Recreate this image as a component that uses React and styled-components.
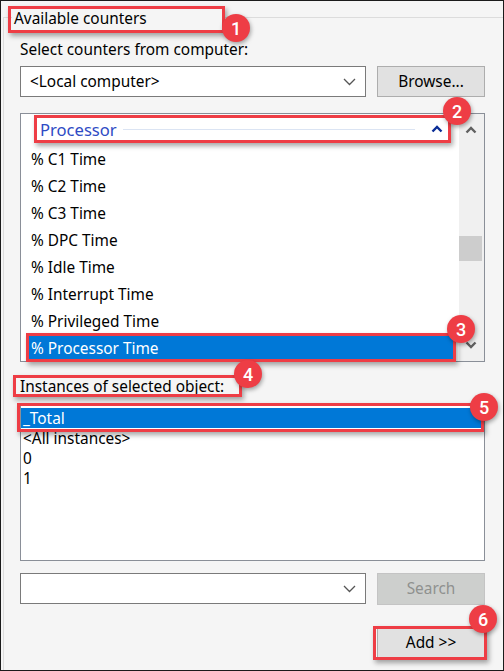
import React from 'react';
import styled, { createGlobalStyle } from 'styled-components';

const GlobalStyle = createGlobalStyle`
  body {
    margin: 0;
    background: #f5f5f5;
  }
`;

const RED = '#ee3d45';

const Frame = styled.div`
  width: 504px;
  height: 671px;
  box-sizing: border-box;
  border: 1px solid #1b1b1b;
  background: #f5f5f5;
  padding: 16px 0 0 2px;
  font-family: "Noto Sans", "Open Sans", sans-serif;
  font-size: 15.4px;
  color: #000;
`;

// group box with light frame on top/left
const Group = styled.div`
  height: 100%;
  box-sizing: border-box;
  border-top: 1px solid #dcdcdc;
  border-left: 1px solid #dcdcdc;
  display: flex;
  flex-direction: column;
  padding: 0 18px 0 16px;
`;

const Callout = styled.div`
  position: relative;
  align-self: ${(p) => p.$align || 'stretch'};
  margin: ${(p) => p.$margin || '0'};
`;

const Mark = styled.span`
  position: absolute;
  left: ${(p) => p.$x}px;
  top: ${(p) => p.$y}px;
  width: ${(p) => p.$w}px;
  height: ${(p) => p.$h}px;
  box-sizing: border-box;
  border: 3px solid ${RED};
  box-shadow: 2px 3px 5px rgba(0, 0, 0, 0.35);
  pointer-events: none;
  z-index: 2;
`;

const Badge = styled.span`
  position: absolute;
  left: ${(p) => p.$cx}px;
  top: ${(p) => p.$cy}px;
  transform: translate(-50%, -50%);
  width: 28px;
  height: 28px;
  border-radius: 50%;
  background: ${RED};
  color: #fff;
  font-family: Roboto, "Liberation Sans", sans-serif;
  font-size: 18px;
  font-weight: 500;
  display: flex;
  align-items: center;
  justify-content: center;
  box-shadow: 1px 2px 4px rgba(0, 0, 0, 0.35);
  z-index: 3;
`;

const Legend = styled.div`
  width: 210px;
  height: 20px;
  line-height: 22px;
  padding: 0 2px;
  box-sizing: border-box;
  background: #f5f5f5;
`;

const FieldLabel = styled.div`
  line-height: 20px;
  margin-top: ${(p) => p.$gap || 0}px;
  white-space: nowrap;
`;

const Row = styled.div`
  display: flex;
  gap: 11px;
  margin-top: ${(p) => p.$gap || 0}px;
  justify-content: ${(p) => p.$justify || 'flex-start'};
`;

const Combo = styled.div`
  flex: 1;
  height: 31px;
  box-sizing: border-box;
  border: 1px solid #7a7a7a;
  background: #fff;
  display: flex;
  align-items: center;
  padding: 0 9px 0 9px;
  justify-content: space-between;
`;

const Button = styled.div`
  width: 108px;
  height: ${(p) => p.$h || 31}px;
  box-sizing: border-box;
  border: 1px solid ${(p) => (p.$disabled ? '#c4c4c4' : '#adadad')};
  background: ${(p) => (p.$disabled ? '#cdcfcd' : '#e1e1e1')};
  color: ${(p) => (p.$disabled ? '#8f918f' : '#000')};
  display: flex;
  align-items: center;
  justify-content: center;
  padding-bottom: 1px;
`;

const ListBox = styled.div`
  margin-top: 16px;
  height: 249px;
  box-sizing: border-box;
  border: 1px solid #8a8f98;
  background: #fff;
  display: flex;
`;

const Items = styled.div`
  flex: 1;
  display: flex;
  flex-direction: column;
`;

const GroupHeader = styled.div`
  height: 30px;
  display: flex;
  align-items: center;
  padding: 0 16px 0 19px;
  color: #2e4bc4;
  font-size: 16.6px;
`;

const HeaderLine = styled.div`
  flex: 1;
  height: 1px;
  background: #dbe4f3;
  margin: 0 16px 0 6px;
`;

const ItemList = styled.div`
  margin: 1px 3px 0 5px;
`;

const Item = styled.div`
  height: 27px;
  box-sizing: border-box;
  padding: 2px 0 0 5px;
  line-height: 25px;
  white-space: nowrap;
  background: ${(p) => (p.$selected ? '#0078d7' : 'transparent')};
  color: ${(p) => (p.$selected ? '#fff' : '#000')};
`;

const Scrollbar = styled.div`
  width: 25px;
  background: #f0f0f0;
  display: flex;
  flex-direction: column;
`;

const ScrollArrow = styled.div`
  height: 32px;
  display: flex;
  align-items: center;
  justify-content: center;
  padding-right: 2px;
`;

const Track = styled.div`
  flex: 1;
`;

const Thumb = styled.div`
  height: 25px;
  margin: 90px 2px 0 0;
  background: #cdcdcd;
`;

const InstList = styled.div`
  margin-top: 7px;
  height: 157px;
  box-sizing: border-box;
  border: 1px solid #8a8f98;
  background: #fff;
  padding: 3px 3px 0 0;
`;

const InstItem = styled.div`
  height: 20px;
  line-height: 21px;
  padding-left: 2px;
  white-space: nowrap;
  background: ${(p) => (p.$selected ? '#0078d7' : 'transparent')};
  color: ${(p) => (p.$selected ? '#fff' : '#000')};
`;

const ChevronDown = () => (
  <svg width="13" height="8" viewBox="0 0 13 8">
    <polyline points="1,1 6.5,6.5 12,1" fill="none" stroke="#555" strokeWidth="1.3" />
  </svg>
);

const Caret = ({ up = true, color }) => (
  <svg width="12" height="8" viewBox="0 0 12 8">
    <polyline
      points={up ? '1.5,6.5 6,2 10.5,6.5' : '1.5,1.5 6,6 10.5,1.5'}
      fill="none"
      stroke={color}
      strokeWidth="2.4"
    />
  </svg>
);

const counters = [
  '% C1 Time',
  '% C2 Time',
  '% C3 Time',
  '% DPC Time',
  '% Idle Time',
  '% Interrupt Time',
  '% Privileged Time',
  '% Processor Time',
];

const instances = ['_Total', '<All instances>', '0', '1'];

export default function App() {
  return (
    <>
      <GlobalStyle />
      <Frame>
        <Group>
          <Callout $align="flex-start" $margin="-10px 0 0 -8px">
            <Legend>Available counters</Legend>
            <Mark $x={-4} $y={-2} $w={217} $h={27} />
            <Badge $cx={224} $cy={20}>1</Badge>
          </Callout>

          <FieldLabel $gap={12}>Select counters from computer:</FieldLabel>
          <Row $gap={6}>
            <Combo>
              <span>&lt;Local computer&gt;</span>
              <ChevronDown />
            </Combo>
            <Button>Browse...</Button>
          </Row>

          <ListBox>
            <Items>
              <Callout>
                <GroupHeader>
                  <span>Processor</span>
                  <HeaderLine />
                  <Caret color="#0a2d96" />
                </GroupHeader>
                <Mark $x={13} $y={1} $w={417} $h={28} />
                <Badge $cx={436} $cy={-3}>2</Badge>
              </Callout>
              <ItemList>
                {counters.map((c) =>
                  c === '% Processor Time' ? (
                    <Callout key={c}>
                      <Item $selected>{c}</Item>
                      <Mark $x={0} $y={-1} $w={430} $h={29} />
                      <Badge $cx={435} $cy={-5}>3</Badge>
                    </Callout>
                  ) : (
                    <Item key={c}>{c}</Item>
                  )
                )}
              </ItemList>
            </Items>
            <Scrollbar>
              <ScrollArrow>
                <Caret color="#606060" />
              </ScrollArrow>
              <Track>
                <Thumb />
              </Track>
              <ScrollArrow>
                <Caret up={false} color="#606060" />
              </ScrollArrow>
            </Scrollbar>
          </ListBox>

          <Callout $align="flex-start" $margin="15px 0 0 0">
            <FieldLabel>Instances of selected object:</FieldLabel>
            <Mark $x={-7} $y={-2} $w={229} $h={22} />
            <Badge $cx={228} $cy={-3}>4</Badge>
          </Callout>

          <InstList>
            {instances.map((i) =>
              i === '_Total' ? (
                <Callout key={i}>
                  <InstItem $selected>{i}</InstItem>
                  <Mark $x={-4} $y={-5} $w={467} $h={29} />
                  <Badge $cx={463} $cy={-1}>5</Badge>
                </Callout>
              ) : (
                <InstItem key={i}>{i}</InstItem>
              )
            )}
          </InstList>

          <Row $gap={12}>
            <Combo>
              <span />
              <ChevronDown />
            </Combo>
            <Button $disabled $h={32}>Search</Button>
          </Row>

          <Row $gap={23} $justify="flex-end">
            <Callout>
              <Button $h={30}>Add &gt;&gt;</Button>
              <Mark $x={-4} $y={-2} $w={114} $h={34} />
              <Badge $cx={106} $cy={-9}>6</Badge>
            </Callout>
          </Row>
        </Group>
      </Frame>
    </>
  );
}
